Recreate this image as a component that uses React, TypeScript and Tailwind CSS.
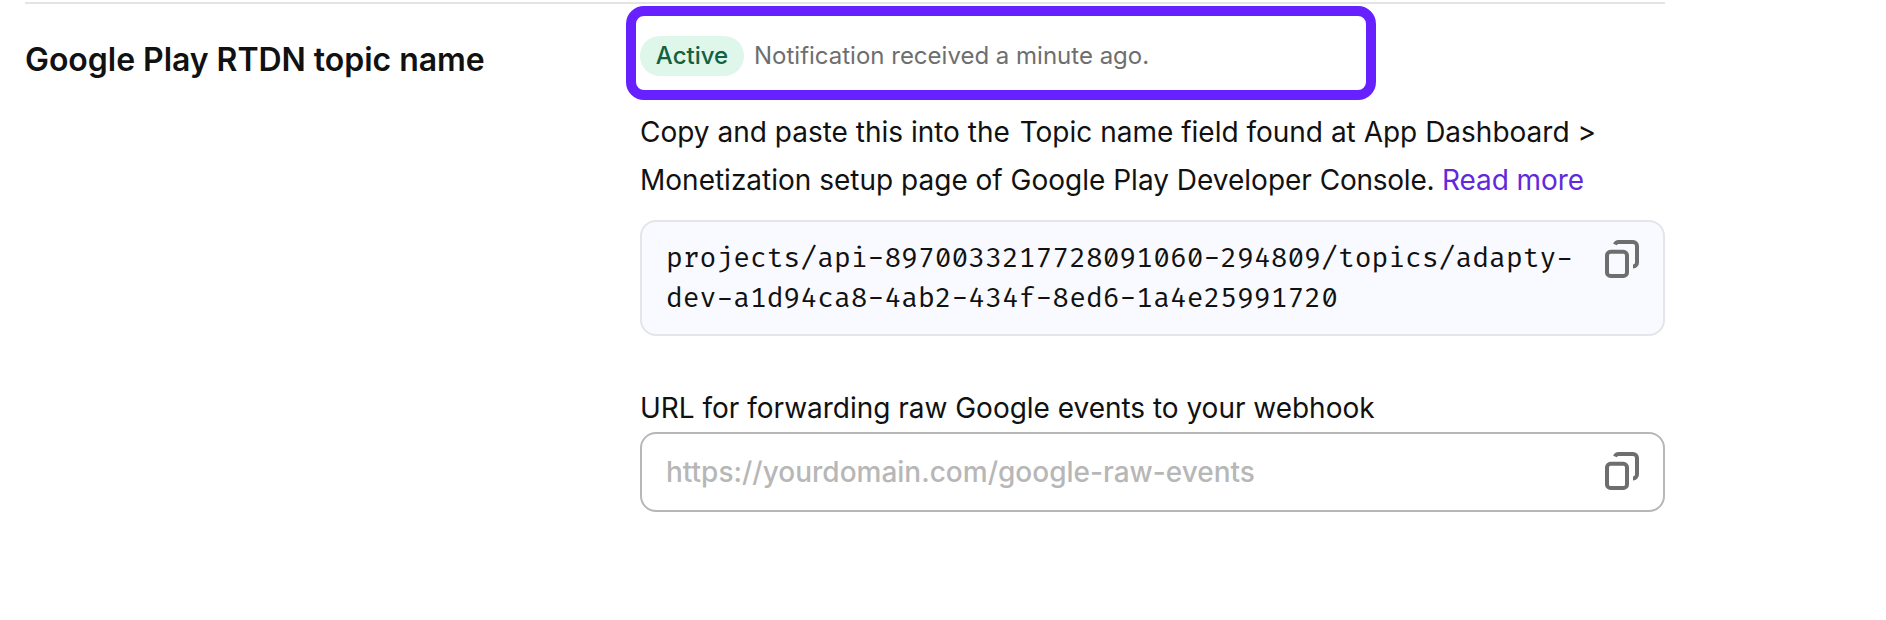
import React from "react";

function CopyIcon({ className = "" }: { className?: string }) {
  return (
    <svg width="40" height="40" viewBox="0 0 40 40" fill="none" stroke="#6e6e6e" strokeWidth="4" className={`shrink-0 ${className}`}>
      <rect x="5" y="13.8" width="20" height="24.2" rx="3.6" />
      <path d="M13 6.5 A4 4 0 0 1 17 4 H31 A4 4 0 0 1 35 8 V24 A4 4 0 0 1 31 28.4" />
    </svg>
  );
}

export default function App() {
  return (
    <div className="h-[620px] w-full overflow-hidden bg-white pl-[25px] pt-[2px] font-['Inter',sans-serif] text-[28px] leading-[48px] text-[#111]">
      <div className="flex w-[1640px] border-t-2 border-[#e4e4e4]">
        <h2 className="w-[615px] pt-8 text-[32px] font-semibold leading-[47px] tracking-[-0.04px]">Google Play RTDN topic name</h2>
        <div className="w-[1025px] pt-8">
          <div className="relative mb-8 flex h-10 items-center gap-2.5 text-2xl leading-10">
            <span className="w-[104px] rounded-full bg-[#dff6ea] text-center font-medium text-[#12613f]">Active</span>
            <span className="text-[#6e6e6e]">Notification received a minute ago.</span>
            <div className="pointer-events-none absolute -left-3.5 -top-[30px] h-[94px] w-[750px] rounded-[18px] border-10 border-[#6720ff]" />
          </div>
          <p className="mb-4 whitespace-nowrap">
            Copy and paste this into the <span className="ml-[2px]">Topic</span> name field found at App Dashboard &gt;
            <br />
            Monetization setup page of Google Play Developer <span className="tracking-[-0.25px]">Console. </span>
            <a className="tracking-[-0.05px] text-[#6229dc]">Read more</a>
          </p>
          <div className="mb-12 flex h-[116px] justify-between rounded-2xl border-2 border-[#e4e5ea] bg-[#f9faff] pl-6 pr-[21px] pt-4">
            <code className="whitespace-nowrap pt-px font-['Fira_Code','Fira_Mono','Liberation_Mono',monospace] text-[27.3px] leading-10">
              projects/api-8970033217728091060-294809/topics/adapty-
              <br />
              dev-a1d94ca8-4ab2-434f-8ed6-1a4e25991720
            </code>
            <CopyIcon />
          </div>
          <label className="block tracking-[-0.02px]">URL for forwarding raw Google events to your webhook</label>
          <div className="flex h-20 items-center justify-between rounded-2xl border-2 border-[#b7b7b7] pl-6 pr-[21px]">
            <span className="font-medium text-[#b7b7b7]">https://yourdomain.com/google-raw-events</span>
            <CopyIcon className="mb-1" />
          </div>
        </div>
      </div>
    </div>
  );
}
